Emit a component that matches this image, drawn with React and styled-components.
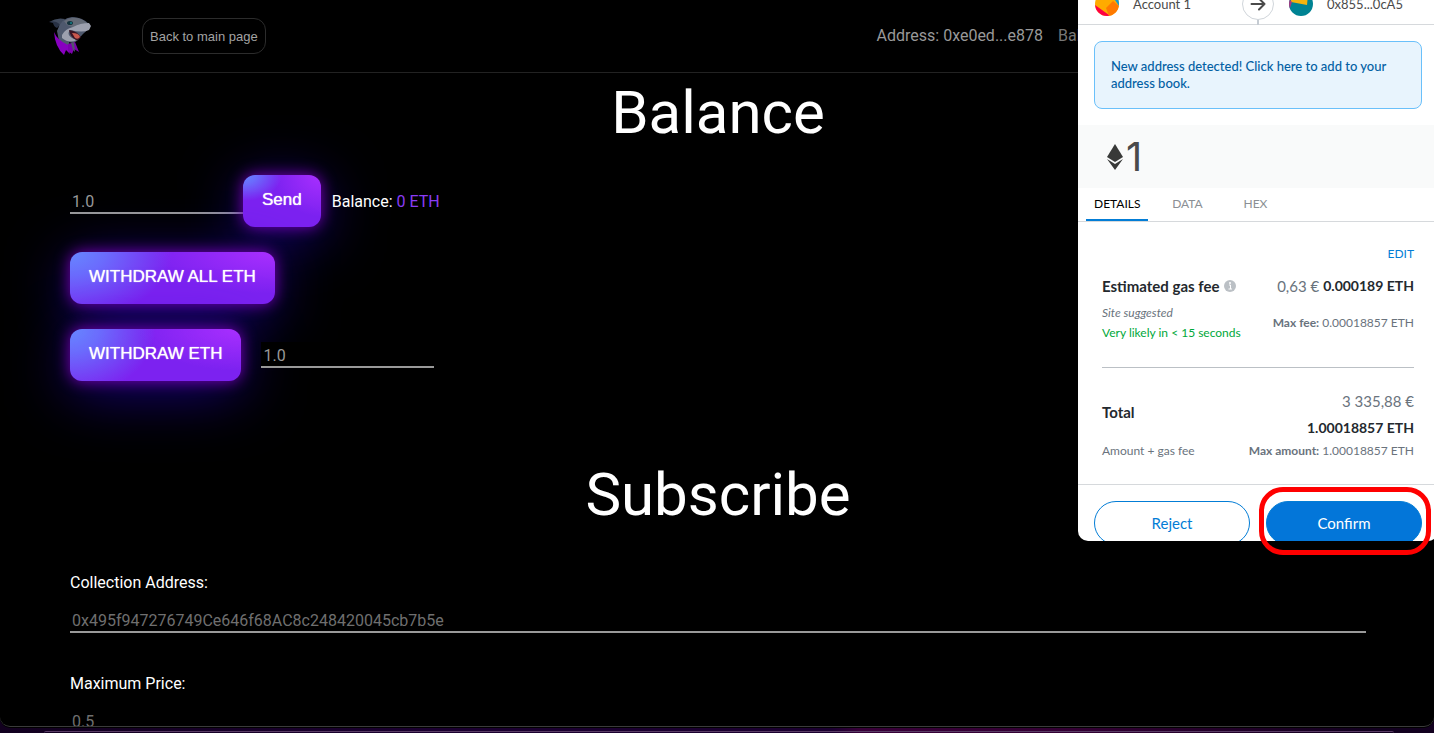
import React from "react";
import styled, { createGlobalStyle, css } from "styled-components";

const GlobalStyle = createGlobalStyle`
  *, *::before, *::after { box-sizing: border-box; }
  body { margin: 0; background: #000; font-family: Roboto, sans-serif; }
  h1, h2, p { margin: 0; }
  button, input { font: inherit; }
`;

const Desktop = styled.div`
  position: relative;
  display: flex;
  flex-direction: column;
  height: 100vh;
  overflow: hidden;
  background: linear-gradient(90deg, #12001f 0%, #1b0030 30%, #1b0030 58%, #380038 60%, #330033 75%, #12001f 95%);
`;

const BrowserWindow = styled.div`
  flex: 1;
  min-height: 0;
  overflow: hidden;
  background: #000;
  border-bottom: 1px solid #3a3a3a;
  border-radius: 0 0 10px 10px;
  box-shadow: 0 1px 0 #000;
`;

const WindowBehind = styled.div`
  height: 2px;
  margin: 4px 40px 0 44px;
  border-top: 1px solid #5a3d66;
  border-radius: 10px 10px 0 0;
`;

const Header = styled.header`
  display: flex;
  align-items: center;
  height: 73px;
  padding: 0 48px;
  border-bottom: 1px solid #222;
`;

const LogoLink = styled.a`
  display: flex;
  margin-right: 50px;
  opacity: 0.85;
`;

const BackButton = styled.button`
  height: 36px;
  padding: 0 7px;
  border: 1px solid #2c2c2c;
  border-radius: 12px;
  background: transparent;
  color: #a3a3a3;
  font-family: "Liberation Sans", Arial, sans-serif;
  font-size: 13px;
`;

const WalletInfo = styled.div`
  display: flex;
  gap: 15px;
  margin-left: auto;
  margin-right: 220px;
  padding-bottom: 2px;
  color: #999;
  font-size: 16px;
`;

const Dimmed = styled.span`
  color: #777;
`;

const Main = styled.main`
  padding: 0 68px 0 70px;
`;

const Title = styled.h1`
  color: #fff;
  font-size: 60px;
  font-weight: 400;
  line-height: 80px;
  text-align: center;
`;

const Rows = styled.div`
  display: flex;
  flex-direction: column;
  gap: 25px;
  padding: 22px 0 74px;
`;

const Row = styled.div`
  display: flex;
  align-items: center;
  gap: ${(p) => p.$gap || 0}px;
`;

const Field = styled.input`
  width: ${(p) => (p.$wide ? "100%" : "173px")};
  height: 26px;
  padding: 2px 2px 0;
  border: 0;
  border-bottom: 2px solid #999;
  border-radius: 0;
  background: #000;
  color: #999;
  font-size: 16px;
  outline: none;
  &::placeholder { color: ${(p) => (p.$wide ? "#6f6f6f" : "#999")}; opacity: 1; }
`;

const GlowButton = styled.button`
  height: 52px;
  padding: 0 19px 2px;
  border: 0;
  border-radius: 12px;
  background:
    radial-gradient(${(p) => (p.$compact ? "50% 50%" : "50% 130%")} at 0% 0%, #6688ff 0%, rgba(104, 120, 255, 0.85) 35%, rgba(125, 50, 242, 0) 100%),
    radial-gradient(60% 80% at 100% 0%, #a92fff 0%, rgba(140, 40, 245, 0) 100%),
    #7c22f0;
  box-shadow: 0 0 15px #7a00b8, 0 10px 60px rgba(40, 0, 220, 0.6);
  color: #fff;
  font-family: "Liberation Sans", Arial, sans-serif;
  font-size: 17px;
  text-shadow: 0 0 1px #fff;
`;

const BalanceText = styled.p`
  margin-left: 11px;
  color: #fff;
  font-size: 16px;
`;

const Violet = styled.span`
  color: #8a3cf5;
`;

const Form = styled.form`
  display: flex;
  flex-direction: column;
  gap: 41px;
  padding-top: 38px;
`;

const FormGroup = styled.div`
  display: flex;
  flex-direction: column;
  gap: 15px;
`;

const Label = styled.label`
  color: #fff;
  font-size: 16px;
  line-height: 19px;
`;

const Popup = styled.aside`
  position: absolute;
  top: -16px;
  right: -4px;
  display: flex;
  flex-direction: column;
  width: 360px;
  height: 557px;
  overflow: hidden;
  border-radius: 10px;
  background: #fff;
  color: #24292e;
  font-family: Lato, sans-serif;
  font-size: 12px;
`;

const Accounts = styled.div`
  display: grid;
  grid-template-columns: 1fr 32px 1fr;
  align-items: center;
  flex: none;
  height: 41px;
  border-bottom: 1px solid #d6d9dc;
  color: #4a4a4a;
  font-size: 13px;
  line-height: 16px;
`;

const Account = styled.div`
  display: flex;
  align-items: center;
  gap: 14px;
  padding-left: ${(p) => (p.$to ? 15 : 17)}px;
`;

const Arrow = styled.div`
  height: 32px;
  width: 32px;
`;

const Notice = styled.a`
  flex: none;
  height: 68px;
  margin: 16px;
  padding: 16px;
  border: 1px solid #6ac0fa;
  border-radius: 8px;
  background: #e8f4fd;
  color: #0260a4;
  font-size: 13px;
  font-weight: 500;
  line-height: 17px;
  text-decoration: none;
`;

const Amount = styled.div`
  display: flex;
  align-items: center;
  flex: none;
  gap: 2px;
  height: 63px;
  padding-left: 28px;
  background: #f9fafa;
  color: #4a4a4a;
  font-family: Inter, sans-serif;
  font-size: 40px;
`;

const Tabs = styled.div`
  display: flex;
  flex: none;
  gap: 10px;
  height: 34px;
  padding-left: 8px;
  border-bottom: 1px solid #d6d9dc;
`;

const Tab = styled.button`
  min-width: 58px;
  padding: 0 8px 1px;
  border: 0;
  border-bottom: 2px solid transparent;
  background: none;
  color: #8b8f94;
  font-size: 12px;
  ${(p) => p.$active && css`
    border-color: #037dd6;
    color: #000;
  `}
`;

const Details = styled.div`
  flex: none;
  height: 262px;
  padding: 24px 24px 0;
`;

const EditRow = styled.div`
  display: flex;
  justify-content: flex-end;
  height: 16px;
`;

const EditLink = styled.a`
  color: #037dd6;
  line-height: 16px;
  text-decoration: none;
`;

const Split = styled.div`
  display: flex;
  justify-content: space-between;
  ${(p) => p.$divided && css`
    height: 106px;
    padding-top: 14px;
    border-bottom: 1px solid #bbc0c5;
  `}
`;

const Column = styled.div`
  display: flex;
  flex-direction: column;
  align-items: ${(p) => (p.$end ? "flex-end" : "flex-start")};
  padding-top: ${(p) => p.$top || 0}px;
  gap: ${(p) => p.$gap || 0}px;
`;

const Strong = styled.p`
  display: flex;
  align-items: center;
  gap: 4px;
  font-size: ${(p) => (p.$label ? 15 : 14)}px;
  font-weight: 700;
  line-height: 20px;
`;

const Fiat = styled.span`
  color: #6a737d;
  font-size: 15px;
  font-weight: 400;
  line-height: 20px;
`;

const Small = styled.p`
  color: ${(p) => p.$color || "#6a737d"};
  font-size: 12px;
  font-style: ${(p) => (p.$italic ? "italic" : "normal")};
  line-height: 20px;
`;

const Actions = styled.footer`
  display: grid;
  grid-template-columns: 1fr 1fr;
  gap: 16px;
  flex: none;
  padding: 16px;
  border-top: 1px solid #d6d9dc;
`;

const Action = styled.button`
  height: 44px;
  padding-bottom: 2px;
  border: 1px solid #037dd6;
  border-radius: 22px;
  background: ${(p) => (p.$primary ? "#0376d9" : "#fff")};
  color: ${(p) => (p.$primary ? "#fff" : "#037dd6")};
  font-size: 15px;
`;

const Highlight = styled.div`
  position: absolute;
  top: 487px;
  right: 3px;
  width: 172px;
  height: 68px;
  border: 5px solid #f00;
  border-radius: 24px;
  pointer-events: none;
`;

const SharkLogo = () => (
  <svg width="44" height="40" viewBox="8 7 44 40" aria-hidden="true">
    <path d="M9 13 Q17 8 25 10 L21 18 Q16 12 9 13Z" fill="#4d596f" />
    <path d="M9 13 Q17 11 20 16 L17 19 Q14 18 13 14Z" fill="#303a50" />
    <path d="M17 22 Q21 9 32 8 Q42 8 49 15 L50 19 Q42 25 38 31 Q34 35 29 33 L31 43 L20 37Z" fill="#5c6880" />
    <path d="M24 12 Q33 6 43 11 L47 14 Q38 15 33 18 L27 16Z" fill="#777e8c" />
    <path d="M22 26 Q25 20 33 18 Q40 14 49 14 L51 17 L49 21 Q43 24 30 21 Q25 27 37 31 Q29 35 22 29Z" fill="#b9bdcd" />
    <path d="M29 21 Q37 22 41 28 Q39 32 36 31 Q30 28 29 21Z" fill="#45182a" />
    <path d="M32 24 Q39 24 40 28 Q38 31 35 29Z" fill="#ee685c" />
    <ellipse cx="30" cy="14" rx="3" ry="2" fill="#173b47" />
    <circle cx="31" cy="14" r="1" fill="#18969f" />
    <path d="M14 23 Q17 31 28 36 L30 45 L26 41 L24 46 Q15 38 14 23Z" fill="#a000e2" />
    <path d="M28 35 L35 33 L39 43 L34 40 L32 45 L28 42Z" fill="#9200cd" />
    <path d="M31 34 L34 33 L35 43 L33 41Z" fill="#5e6480" />
  </svg>
);

const FromAvatar = () => (
  <svg width="24" height="24" viewBox="0 0 24 24" aria-hidden="true">
    <clipPath id="fromClip"><circle cx="12" cy="12" r="12" /></clipPath>
    <g clipPath="url(#fromClip)">
      <path d="M0 0H24V24H0Z" fill="#ffab00" />
      <path d="M0 13 L14 23 V24H0Z" fill="#ff0044" />
      <path d="M11 16 L18 9 L24 14 V24H14Z" fill="#ff7a00" />
      <path d="M20 8 L24 6 V14Z" fill="#159bd0" />
    </g>
  </svg>
);

const ToAvatar = () => (
  <svg width="24" height="24" viewBox="0 0 24 24" aria-hidden="true">
    <clipPath id="toClip"><circle cx="12" cy="12" r="12" /></clipPath>
    <g clipPath="url(#toClip)">
      <path d="M0 0H24V24H0Z" fill="#008393" />
      <path d="M2 3 H19 L18 13 L2 10Z" fill="#f4b40e" />
      <path d="M0 7L3 10L1 16L0 16Z" fill="#a33a83" />
    </g>
  </svg>
);

const ArrowIcon = () => (
  <svg width="32" height="38" viewBox="0 0 32 38" aria-hidden="true">
    <path d="M16 31V37" stroke="#c6ccd3" strokeWidth="2" />
    <circle cx="16" cy="16" r="15.5" fill="#fff" stroke="#d0d5da" />
    <path d="M9.5 16H22.5M17 10.5L22.5 16L17 21.5" fill="none" stroke="#4a4a4a" strokeWidth="2" strokeLinecap="round" strokeLinejoin="round" />
  </svg>
);

const EthIcon = () => (
  <svg width="18" height="26" viewBox="0 0 18 26" aria-hidden="true">
    <path d="M9 0L17 13L9 18L1 13Z" fill="#383938" />
    <path d="M1 15L9 20L17 15L9 26Z" fill="#383938" />
  </svg>
);

const InfoIcon = () => (
  <svg width="12" height="12" viewBox="0 0 12 12" aria-hidden="true">
    <circle cx="6" cy="6" r="6" fill="#bbc0c5" />
    <circle cx="6" cy="3" r="1" fill="#fff" />
    <path d="M5 5H6.5V9M4.5 9H8" fill="none" stroke="#fff" />
  </svg>
);

export default function App() {
  return (
    <Desktop>
      <GlobalStyle />
      <BrowserWindow>
        <Header>
          <LogoLink href="#" aria-label="Home"><SharkLogo /></LogoLink>
          <BackButton type="button">Back to main page</BackButton>
          <WalletInfo>
            <span>Address: 0xe0ed...e878</span>
            <Dimmed>Balance: 0 ETH</Dimmed>
          </WalletInfo>
        </Header>
        <Main>
          <Title>Balance</Title>
          <Rows>
            <Row>
              <Field aria-label="Amount to send" placeholder="1.0" />
              <GlowButton type="button" $compact>Send</GlowButton>
              <BalanceText>Balance: <Violet>0 ETH</Violet></BalanceText>
            </Row>
            <Row>
              <GlowButton type="button">WITHDRAW ALL ETH</GlowButton>
            </Row>
            <Row $gap={20}>
              <GlowButton type="button">WITHDRAW ETH</GlowButton>
              <Field aria-label="Amount to withdraw" placeholder="1.0" />
            </Row>
          </Rows>
          <Title as="h2">Subscribe</Title>
          <Form>
            <FormGroup>
              <Label htmlFor="collection">Collection Address:</Label>
              <Field $wide id="collection" placeholder="0x495f947276749Ce646f68AC8c248420045cb7b5e" />
            </FormGroup>
            <FormGroup>
              <Label htmlFor="price">Maximum Price:</Label>
              <Field $wide id="price" placeholder="0.5" />
            </FormGroup>
          </Form>
        </Main>
      </BrowserWindow>
      <WindowBehind />

      <Popup>
        <Accounts>
          <Account><FromAvatar />Account 1</Account>
          <Arrow><ArrowIcon /></Arrow>
          <Account $to><ToAvatar />0x855...0cA5</Account>
        </Accounts>
        <Notice href="#">New address detected! Click here to add to your address book.</Notice>
        <Amount><EthIcon />1</Amount>
        <Tabs>
          <Tab type="button" $active>DETAILS</Tab>
          <Tab type="button">DATA</Tab>
          <Tab type="button">HEX</Tab>
        </Tabs>
        <Details>
          <EditRow><EditLink href="#">EDIT</EditLink></EditRow>
          <Split $divided>
            <Column>
              <Strong $label>Estimated gas fee <InfoIcon /></Strong>
              <Column $top={7}>
                <Small $italic>Site suggested</Small>
                <Small $color="#00a83a">Very likely in &lt; 15 seconds</Small>
              </Column>
            </Column>
            <Column $end $gap={17}>
              <Strong><Fiat>0,63 €</Fiat> 0.000189 ETH</Strong>
              <Small><b>Max fee:</b> 0.00018857 ETH</Small>
            </Column>
          </Split>
          <Split>
            <Column $top={34} $gap={19}>
              <Strong $label>Total</Strong>
              <Small>Amount + gas fee</Small>
            </Column>
            <Column $end $top={23}>
              <Fiat>3 335,88 €</Fiat>
              <Column $end $top={7} $gap={3}>
                <Strong>1.00018857 ETH</Strong>
                <Small><b>Max amount:</b> 1.00018857 ETH</Small>
              </Column>
            </Column>
          </Split>
        </Details>
        <Actions>
          <Action type="button">Reject</Action>
          <Action type="button" $primary>Confirm</Action>
        </Actions>
      </Popup>
      <Highlight />
    </Desktop>
  );
}
